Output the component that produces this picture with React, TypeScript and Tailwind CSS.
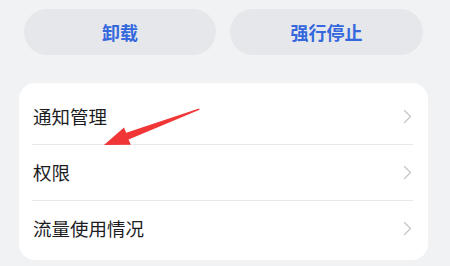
import { Fragment } from 'react';

const rows = ['通知管理', '权限', '流量使用情况'];

function Chevron() {
  return (
    <svg width="9" height="15" viewBox="0 0 9 15" fill="none">
      <polyline points="1.5,1.5 7.5,7.5 1.5,13.5" stroke="#c6c6ca" strokeWidth="1.4" strokeLinecap="round" strokeLinejoin="round" />
    </svg>
  );
}

export default function App() {
  return (
    <div
      className="relative w-[450px] h-[266px] overflow-hidden bg-[#f1f2f4]"
      style={{ fontFamily: '"Noto Sans CJK SC", "Noto Sans", sans-serif' }}
    >
      {/* Action buttons */}
      <div className="flex gap-[14px] pl-[24px] pt-[9px]">
        <button className="w-[192px] h-[46px] rounded-full bg-[#e6e7eb] text-[18px] font-semibold text-[#3568dd]">
          卸载
        </button>
        <button className="w-[193px] h-[46px] rounded-full bg-[#e6e7eb] text-[18px] font-semibold text-[#3568dd]">
          强行停止
        </button>
      </div>

      {/* Settings list */}
      <div className="ml-[19px] mt-[28px] w-[409px] rounded-[16px] bg-white pt-[6px] pb-[4px]">
        {rows.map((label, i) => (
          <Fragment key={label}>
            {i > 0 && <div className="ml-[13px] mr-[15px] h-px bg-[#e8e8ea]" />}
            <div className="flex h-[55px] items-center justify-between pl-[14px] pr-[16px]">
              <span className="text-[18.5px] text-[#1d1d1f]">{label}</span>
              <Chevron />
            </div>
          </Fragment>
        ))}
      </div>

      {/* Annotation arrow */}
      <svg className="absolute left-0 top-0 pointer-events-none" width="450" height="266">
        <polygon
          points="199,108.5 199.5,109.8 128.6,139.6 130.8,144.8 104,145 124,127.5 126.2,132.8"
          fill="#f03636"
        />
      </svg>
    </div>
  );
}
